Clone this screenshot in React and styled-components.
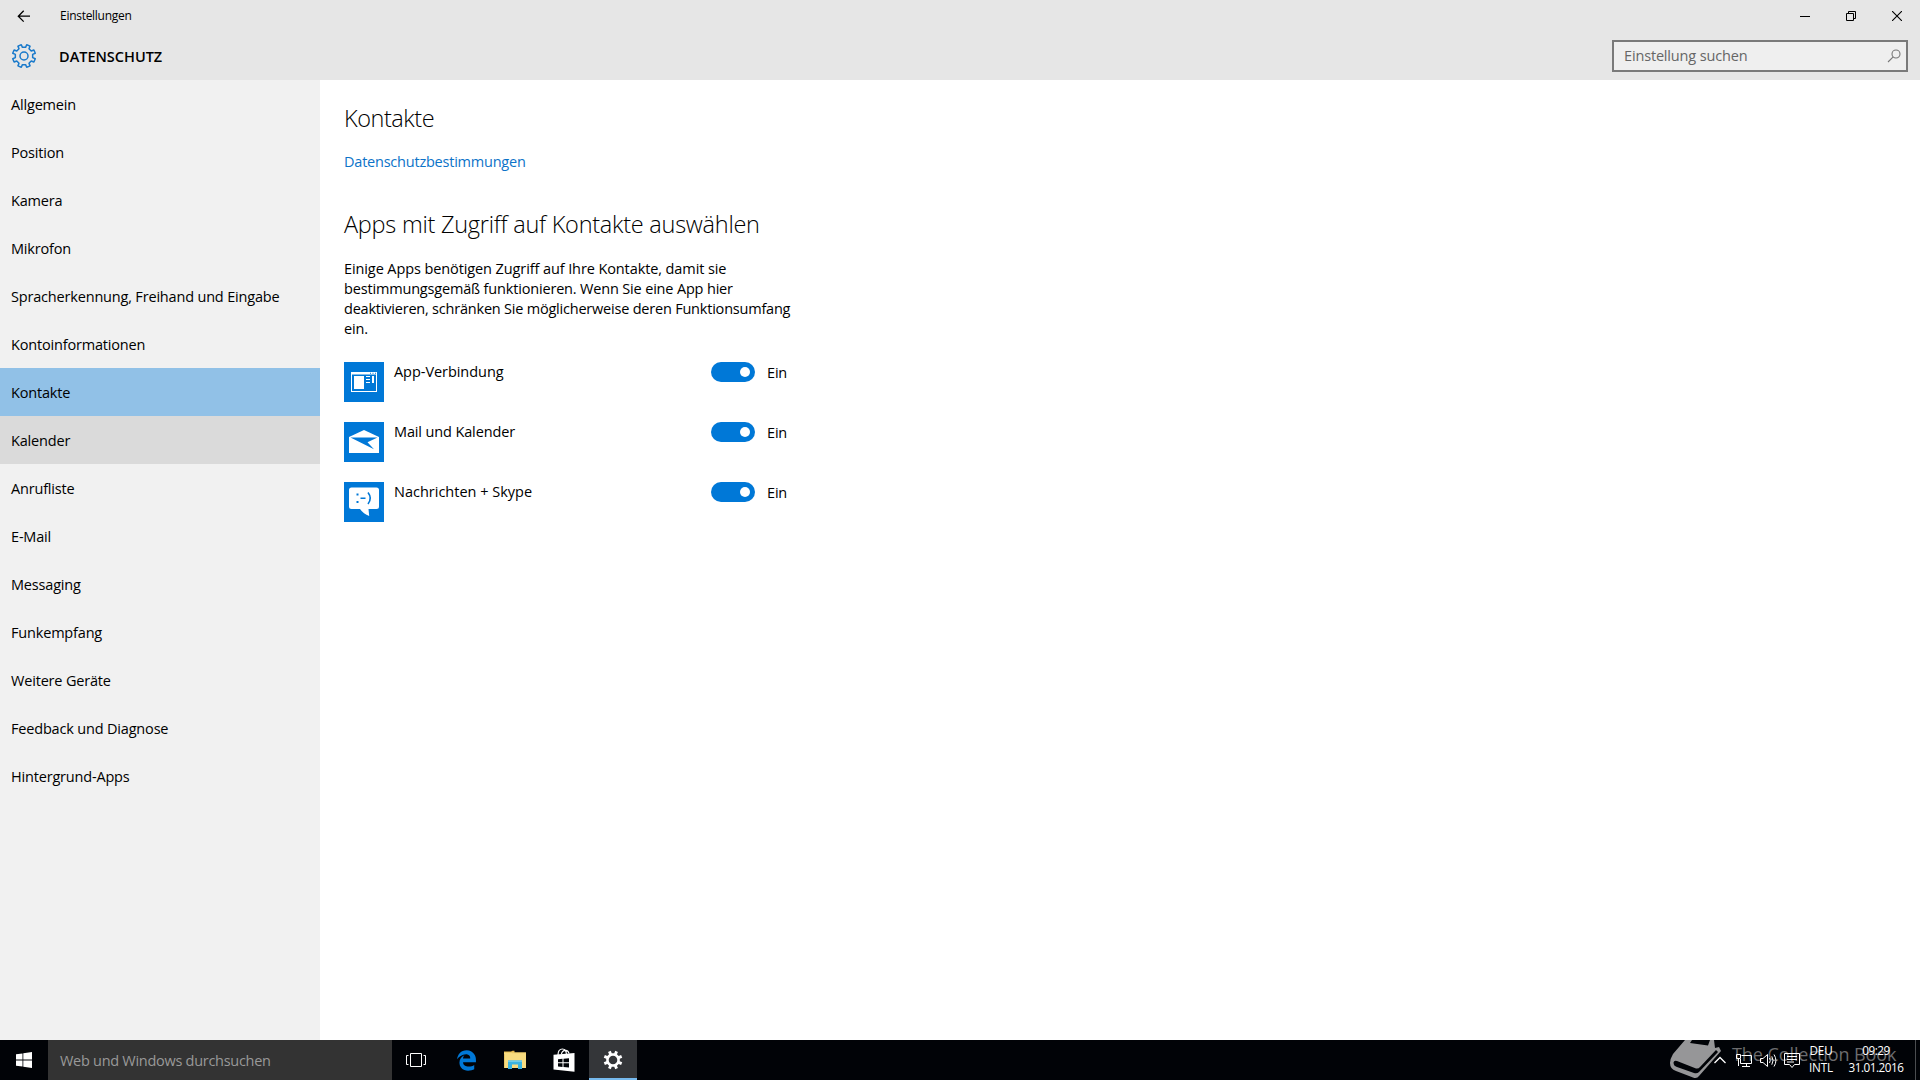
import React from 'react';
import styled, { createGlobalStyle } from 'styled-components';
import { FaEdgeLegacy } from 'react-icons/fa6';

const ACCENT = '#0078d7';

const GlobalStyle = createGlobalStyle`
  * { box-sizing: border-box; }
  body {
    margin: 0;
    overflow: hidden;
    background: #fff;
    color: #000;
    font-family: 'Open Sans', 'Noto Sans', sans-serif;
    font-size: 14.5px;
    letter-spacing: -0.18px;
    line-height: 20px;
  }
  svg { display: block; flex: none; }
`;

const Screen = styled.div`
  display: flex;
  flex-direction: column;
  width: 1920px;
  height: 1080px;
`;

const TopArea = styled.header`
  height: 80px;
  background: #e6e6e6;
`;

const TitleBar = styled.div`
  display: flex;
  align-items: center;
  height: 31px;
`;

const BackButton = styled.div`
  display: flex;
  justify-content: center;
  width: 48px;
  margin-right: 12px;
`;

const WindowTitle = styled.div`
  flex: 1;
  padding-top: 1px;
  font-size: 12px;
  letter-spacing: -0.28px;
`;

const CaptionButton = styled.div`
  display: flex;
  justify-content: center;
  width: 46px;
`;

const PageBar = styled.div`
  display: flex;
  align-items: center;
  height: 49px;
  padding: 1px 12px 0 0;
`;

const GearSlot = styled.div`
  display: flex;
  justify-content: center;
  width: 48px;
  margin-right: 11px;
`;

const PageName = styled.div`
  flex: 1;
  padding-top: 1px;
  font-weight: 600;
  letter-spacing: 0;
`;

const SearchBox = styled.div`
  display: flex;
  align-items: center;
  justify-content: space-between;
  width: 296px;
  height: 32px;
  padding: 0 5px 0 10px;
  border: 2px solid #7a7a7a;
  background: #efefef;
  color: #666;
  letter-spacing: -0.16px;
`;

const Body = styled.div`
  display: flex;
  flex: 1;
  min-height: 0;
`;

const Sidebar = styled.nav`
  width: 320px;
  background: #f1f1f1;
`;

const NavItem = styled.div`
  display: flex;
  align-items: center;
  height: 48px;
  padding: 2px 0 0 11px;
  background: ${(p) => (p.$state === 'selected' ? '#91c1e7' : p.$state === 'hover' ? '#dadada' : 'transparent')};
`;

const Content = styled.main`
  flex: 1;
  padding: 22px 0 0 24px;
`;

const Heading = styled.h1`
  margin: 0;
  font-size: 23.5px;
  font-weight: 350;
  line-height: 32px;
  letter-spacing: ${(p) => p.$track};
`;

const PolicyLink = styled.a`
  display: block;
  margin: 18px 0 36px;
  color: #0c73c8;
  letter-spacing: -0.22px;
`;

const Description = styled.p`
  width: 460px;
  margin: 19px 0 23px;
`;

const Line = styled.span`
  display: block;
  white-space: nowrap;
  letter-spacing: ${(p) => p.$track};
`;

const AppList = styled.div`
  display: flex;
  flex-direction: column;
  gap: 20px;
`;

const AppRow = styled.div`
  display: flex;
  align-items: flex-start;
  height: 40px;
`;

const AppTile = styled.div`
  width: 40px;
  height: 40px;
  margin-right: 10px;
  background: ${ACCENT};
`;

const AppName = styled.div`
  width: 317px;
  letter-spacing: ${(p) => p.$track};
`;

const Toggle = styled.div`
  display: flex;
  align-items: center;
  justify-content: flex-end;
  width: 44px;
  height: 20px;
  padding-right: 5px;
  border-radius: 10px;
  background: ${ACCENT};
`;

const Thumb = styled.div`
  width: 10px;
  height: 10px;
  border-radius: 50%;
  background: #fff;
`;

const ToggleLabel = styled.div`
  padding: 1px 0 0 12px;
`;

const Taskbar = styled.footer`
  position: relative;
  display: flex;
  height: 40px;
  overflow: hidden;
  background: #010307;
  color: #fff;
`;

const StartButton = styled.div`
  display: flex;
  align-items: center;
  justify-content: center;
  width: 48px;
`;

const TaskSearch = styled.div`
  display: flex;
  align-items: center;
  width: 344px;
  padding: 1px 0 0 12px;
  background: #333;
  color: #999;
  letter-spacing: -0.28px;
`;

const TaskButtons = styled.div`
  display: flex;
  flex: 1;
  gap: 1px;
`;

const TaskButton = styled.div`
  display: flex;
  align-items: center;
  justify-content: center;
  width: ${(p) => (p.$wide ? '49px' : '48px')};
  padding-right: ${(p) => (p.$wide ? '1px' : 0)};
  background: ${(p) => (p.$active ? '#343639' : 'transparent')};
  box-shadow: ${(p) => (p.$active ? 'inset 0 -2px 0 #76b9ed' : 'none')};
`;

const Watermark = styled.div`
  position: absolute;
  top: 0;
  left: 1668px;
  display: flex;
  align-items: flex-start;
  color: #6c6c6e;
  font-size: 18px;
  letter-spacing: -0.08px;
  line-height: 29px;
  white-space: nowrap;
`;

const WatermarkText = styled.span`
  padding-left: 11px;
`;

const Tray = styled.div`
  position: relative;
  display: flex;
  align-items: center;
  height: 40px;
`;

const TrayIcon = styled.div`
  margin-right: ${(p) => p.$gap}px;
`;

const TrayText = styled.div`
  display: flex;
  flex-direction: column;
  align-items: center;
  width: ${(p) => p.$width}px;
  margin-right: ${(p) => p.$gap}px;
  padding-bottom: 3px;
  font-size: 11.7px;
  letter-spacing: ${(p) => p.$track};
  line-height: 17px;
`;

const ShowDesktop = styled.div`
  width: 5px;
  height: 40px;
  border-left: 1px solid #4b4d50;
`;

function gearPath(c, outer, inner, teeth, start) {
  const step = (Math.PI * 2) / teeth;
  const pt = (r, a) => `${(c + r * Math.cos(a)).toFixed(2)} ${(c + r * Math.sin(a)).toFixed(2)}`;
  const pts = [];
  for (let i = 0; i < teeth; i += 1) {
    const a = start + i * step;
    pts.push(pt(inner, a - step * 0.27), pt(outer, a - step * 0.2), pt(outer, a + step * 0.2), pt(inner, a + step * 0.27));
  }
  return `M${pts.join('L')}Z`;
}

const OutlineGear = () => (
  <svg width="26" height="26" viewBox="0 0 26 26" fill="none" stroke="#1a7acb" strokeWidth="1.5" strokeLinejoin="round">
    <path d={gearPath(13, 11.6, 8.8, 8, Math.PI / 8)} />
    <circle cx="13" cy="13" r="4" />
  </svg>
);

const SolidGear = () => (
  <svg width="20" height="20" viewBox="0 0 20 20" fill="#fff" fillRule="evenodd">
    <path d={`${gearPath(10, 9.5, 6.9, 8, Math.PI / 8)}M10 5.7A4.3 4.3 0 1 0 10 14.3A4.3 4.3 0 1 0 10 5.7Z`} />
  </svg>
);

const BackIcon = () => (
  <svg width="14" height="14" viewBox="0 0 14 14" fill="none" stroke="#000" strokeWidth="1.3">
    <path d="M13 7.2H1.5M6.7 1.8L1.3 7.2L6.7 12.6" />
  </svg>
);

const MinimizeIcon = () => (
  <svg width="10" height="10" viewBox="0 0 10 10" stroke="#000"><path d="M0 5.5H10" /></svg>
);

const RestoreIcon = () => (
  <svg width="10" height="10" viewBox="0 0 10 10" fill="none" stroke="#000"><path d="M.5 2.5H7.5V9.5H.5ZM2.5 2.5V.5H9.5V7.5H7.5" /></svg>
);

const CloseIcon = () => (
  <svg width="10" height="10" viewBox="0 0 10 10" stroke="#000" strokeWidth="1.1"><path d="M0 0L10 10M10 0L0 10" /></svg>
);

const SearchIcon = () => (
  <svg width="14" height="14" viewBox="0 0 14 14" fill="none" stroke="#777" strokeWidth="1.1">
    <circle cx="9" cy="5" r="4" /><path d="M6.2 7.8L1 13" />
  </svg>
);

const ConnectorIcon = () => (
  <svg width="40" height="40" viewBox="0 0 40 40" fill="#fff">
    <path fillRule="evenodd" d="M7 10H33V30H7ZM8 12.5V29H32V12.5Z" />
    <path d="M10 14H20V27H10ZM22 14H26V15H22ZM22 17H26V18H22ZM22 20H26V21H22ZM28 14H30V21H28Z" />
    <path fill={ACCENT} d="M26 10.8h1v1h-1zM28.5 10.8h1v1h-1zM31 10.8h1v1h-1z" />
  </svg>
);

const MailIcon = () => (
  <svg width="40" height="40" viewBox="0 0 40 40" fill="#fff">
    <path d="M5 15L20 8L35 15V31H5Z" />
    <path fill={ACCENT} d="M6.5 15.5H33.5L23.5 20.2L30 27.2L17.5 21Z" />
  </svg>
);

const MessageIcon = () => (
  <svg width="40" height="40" viewBox="0 0 40 40">
    <path fill="#fff" d="M7.5 5.5H32.5Q35 5.5 35 8V24.5Q35 27 32.5 27H24.5L25.2 34Q19.5 32 16 27H7.5Q5 27 5 24.5V8Q5 5.5 7.5 5.5Z" />
    <path fill={ACCENT} d="M12.5 11.5h2v2h-2zM12.5 19h2v2h-2zM16.5 15.5h5v1.5h-5z" />
    <path fill="none" stroke={ACCENT} strokeWidth="1.6" d="M24 10.5Q28.5 16.2 24 22" />
  </svg>
);

const WindowsIcon = () => (
  <svg width="16" height="16" viewBox="0 0 16 16" fill="#fff">
    <path d="M0 2.3L6.5 1.4V7.5H0ZM7.3 1.2L16 0V7.5H7.3ZM0 8.4H6.5V14.6L0 13.7ZM7.3 8.4H16V16L7.3 14.7Z" />
  </svg>
);

const TaskViewIcon = () => (
  <svg width="20" height="16" viewBox="0 0 20 16" fill="none" stroke="#fff">
    <path d="M4.5 1.5H15.5V14.5H4.5ZM2.5 3.5H.5V12.5H2.5M17.5 3.5H19.5V12.5H17.5" />
  </svg>
);

const ExplorerIcon = () => (
  <svg width="22" height="20" viewBox="0 0 22 20">
    <path fill="#e5b94d" d="M0 1.5H7L8.5 .8H10.5V3H0Z" />
    <path fill="#f8dc80" d="M0 2.5H22V18H0Z" />
    <path fill="#e9c765" d="M0 4H1V18H0ZM8 2.5H22V3.3H8Z" />
    <path fill="#3bb4e0" d="M4 10.5H18V19H14V14.5H8V19H4Z" />
    <path fill="#6dcdec" d="M4 10.5H18V12H4Z" />
  </svg>
);

const StoreIcon = () => (
  <svg width="22" height="24" viewBox="0 0 22 24">
    <path fill="none" stroke="#fff" strokeWidth="1.2" d="M5 7Q5 1 9.5 1Q13 1 13.5 6.5M8.5 6Q9 2.5 12.5 2.3Q15.5 2.5 16 5.500" />
    <path fill="#fff" d="M.5 6.8L21.5 5V23.8L.5 21.5Z" />
    <path fill="#010307" d="M5 11.2L9.5 10.8V14.3H5ZM10.5 10.7L16 10.2V14.3H10.5ZM5 15.3H9.5V18.9L5 18.4ZM10.5 15.3H16V19.5L10.5 19Z" />
  </svg>
);

const BookIcon = () => (
  <svg width="53" height="40" viewBox="0 0 53 40">
    <path fill="#969698" d="M17 0H46L47 8L51 7L53 11L31 36Q29 39 25 37.5L8 31Q2 29 2 23Q2 19 5 14Z" />
    <path fill="#010307" d="M24 0H42L40 5.5L22 3ZM5.500 22.500Q6 20 9 21L28 28.500Q30.500 29 32 27L48 10L50 12L31 32Q29 34 26 33L9 27Q5.500 26 5.500 22.500Z" />
  </svg>
);

const ChevronIcon = () => (
  <svg width="12" height="8" viewBox="0 0 12 8" fill="none" stroke="#fff" strokeWidth="1.3"><path d="M.5 7L6 1.5L11.5 7" /></svg>
);

const NetworkIcon = () => (
  <svg width="17" height="15" viewBox="0 0 17 15" fill="none" stroke="#fff">
    <path d="M5.5 2.5H15.5V10.5H4.5V6M10.5 10.5V13.5M6 13.5H14M.5 1.5H4.5V5.5H.5ZM2.5 5.5V13" />
  </svg>
);

const VolumeIcon = () => (
  <svg width="17" height="15" viewBox="0 0 17 15" fill="none" stroke="#fff">
    <path d="M.5 5.5H3L7.5 1.5V13.5L3 9.5H.5ZM9.5 5Q11 7.5 9.5 10M11.8 3.3Q14.3 7.5 11.8 11.7M14 1.5Q17.8 7.5 14 13.5" />
  </svg>
);

const ActionIcon = () => (
  <svg width="16" height="17" viewBox="0 0 16 17" fill="none" stroke="#fff">
    <path d="M.5 1.5H15.5V12.5H10.5L8 15.5L5.5 12.5H.5ZM3 4.5H13M3 7.5H13M3 10H10" />
  </svg>
);

const NAV = [
  'Allgemein', 'Position', 'Kamera', 'Mikrofon', 'Spracherkennung, Freihand und Eingabe',
  'Kontoinformationen', 'Kontakte', 'Kalender', 'Anrufliste', 'E-Mail', 'Messaging',
  'Funkempfang', 'Weitere Geräte', 'Feedback und Diagnose', 'Hintergrund-Apps',
];

const NAV_STATE = { Kontakte: 'selected', Kalender: 'hover' };

const APPS = [
  { name: 'App-Verbindung', Icon: ConnectorIcon, track: '-0.05px' },
  { name: 'Mail und Kalender', Icon: MailIcon, track: '-0.13px' },
  { name: 'Nachrichten + Skype', Icon: MessageIcon, track: '0' },
];

export default function App() {
  return (
    <Screen>
      <GlobalStyle />
      <TopArea>
        <TitleBar>
          <BackButton><BackIcon /></BackButton>
          <WindowTitle>Einstellungen</WindowTitle>
          <CaptionButton><MinimizeIcon /></CaptionButton>
          <CaptionButton><RestoreIcon /></CaptionButton>
          <CaptionButton><CloseIcon /></CaptionButton>
        </TitleBar>
        <PageBar>
          <GearSlot><OutlineGear /></GearSlot>
          <PageName>DATENSCHUTZ</PageName>
          <SearchBox>Einstellung suchen<SearchIcon /></SearchBox>
        </PageBar>
      </TopArea>
      <Body>
        <Sidebar>
          {NAV.map((label) => <NavItem key={label} $state={NAV_STATE[label]}>{label}</NavItem>)}
        </Sidebar>
        <Content>
          <Heading $track="-0.45px">Kontakte</Heading>
          <PolicyLink>Datenschutzbestimmungen</PolicyLink>
          <Heading as="h2" $track="-0.25px">Apps mit Zugriff auf Kontakte auswählen</Heading>
          <Description>
            <Line $track="-0.1px">Einige Apps benötigen Zugriff auf Ihre Kontakte, damit sie </Line>
            <Line $track="-0.17px">bestimmungsgemäß funktionieren. Wenn Sie eine App hier </Line>
            <Line $track="-0.21px">deaktivieren, schränken Sie möglicherweise deren Funktionsumfang </Line>
            <Line $track="-0.18px">ein.</Line>
          </Description>
          <AppList>
            {APPS.map(({ name, Icon, track }) => (
              <AppRow key={name}>
                <AppTile><Icon /></AppTile>
                <AppName $track={track}>{name}</AppName>
                <Toggle><Thumb /></Toggle>
                <ToggleLabel>Ein</ToggleLabel>
              </AppRow>
            ))}
          </AppList>
        </Content>
      </Body>
      <Taskbar>
        <StartButton><WindowsIcon /></StartButton>
        <TaskSearch>Web und Windows durchsuchen</TaskSearch>
        <TaskButtons>
          <TaskButton $wide><TaskViewIcon /></TaskButton>
          <TaskButton><FaEdgeLegacy size={21} color={ACCENT} /></TaskButton>
          <TaskButton><ExplorerIcon /></TaskButton>
          <TaskButton><StoreIcon /></TaskButton>
          <TaskButton $active><SolidGear /></TaskButton>
        </TaskButtons>
        <Watermark><BookIcon /><WatermarkText>The Collection Book</WatermarkText></Watermark>
        <Tray>
          <TrayIcon $gap={10}><ChevronIcon /></TrayIcon>
          <TrayIcon $gap={7}><NetworkIcon /></TrayIcon>
          <TrayIcon $gap={7}><VolumeIcon /></TrayIcon>
          <TrayIcon $gap={8}><ActionIcon /></TrayIcon>
          <TrayText $width={26} $gap={14} $track="-0.1px"><span>DEU</span><span>INTL</span></TrayText>
          <TrayText $width={56} $gap={11} $track="-0.45px"><span>09:29</span><span>31.01.2016</span></TrayText>
          <ShowDesktop />
        </Tray>
      </Taskbar>
    </Screen>
  );
}
